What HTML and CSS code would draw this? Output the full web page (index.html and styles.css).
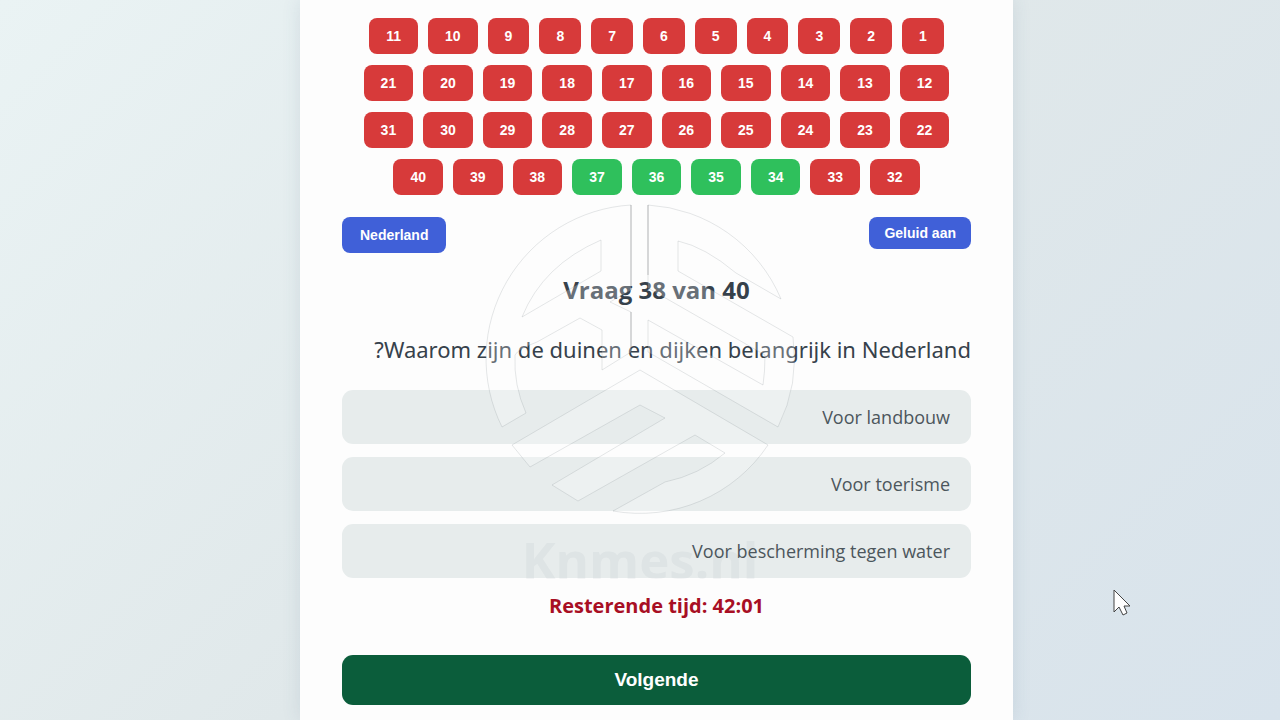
FILE: index.html
```html
<!DOCTYPE html>
<html lang="nl">
<head>
<meta charset="utf-8">
<meta name="viewport" content="width=device-width, initial-scale=1">
<title>Knmes.nl</title>
<link rel="stylesheet" href="styles.css">
</head>
<body>
<main class="quiz" dir="rtl">
  <nav class="numbers" aria-label="Vragen">
    <button class="num">1</button><button class="num">2</button><button class="num">3</button><button class="num">4</button><button class="num">5</button><button class="num">6</button><button class="num">7</button><button class="num">8</button><button class="num">9</button><button class="num">10</button><button class="num">11</button>
    <button class="num">12</button><button class="num">13</button><button class="num">14</button><button class="num">15</button><button class="num">16</button><button class="num">17</button><button class="num">18</button><button class="num">19</button><button class="num">20</button><button class="num">21</button>
    <button class="num">22</button><button class="num">23</button><button class="num">24</button><button class="num">25</button><button class="num">26</button><button class="num">27</button><button class="num">28</button><button class="num">29</button><button class="num">30</button><button class="num">31</button>
    <button class="num">32</button><button class="num">33</button><button class="num done">34</button><button class="num done">35</button><button class="num done">36</button><button class="num done">37</button><button class="num">38</button><button class="num">39</button><button class="num">40</button>
  </nav>
  <div class="tools">
    <button class="tool">Geluid aan</button>
    <button class="tool topic">Nederland</button>
  </div>
  <h1 class="title">Vraag 38 van 40</h1>
  <p class="question">Waarom zijn de duinen en dijken belangrijk in Nederland?</p>
  <div class="options">
    <button class="option">Voor landbouw</button>
    <button class="option">Voor toerisme</button>
    <button class="option">Voor bescherming tegen water</button>
  </div>
  <p class="timer">Resterende tijd: 42:01</p>
  <button class="next">Volgende</button>
  <div class="watermark" dir="ltr">
    <svg class="mark" viewBox="480 200 320 320" aria-hidden="true">
      <path d="M631 205A154 154 0 0 0 502 427L526 413A126 126 0 0 1 515 355Q518 349 537 342L580 318L602 330V370L631 352V312L610 302L631 290Z M601 240V271L522 317Q543 265 601 240Z"/>
      <path d="M648 205A154 154 0 0 1 781 299L736 273Q705 247 678 241V271L793 337A154 154 0 0 1 778 427L648 352V320L763 385Q765 372 765 355L648 288Z"/>
      <path d="M640 370L768 445A154 154 0 0 1 613 511L665 482Q699 475 725 453L695 435L578 501L552 485L665 418L640 405L530 467L512 445Z"/>
      <path class="edge" d="M631 205V290M631 312V352M648 205V275"/>
    </svg>
    <span class="brand">Knmes.nl</span>
  </div>
</main>
<svg class="pointer" viewBox="0 0 18 28" aria-hidden="true"><path d="M1 1V23L6 18L10 26L14 24L11 17H17Z"/></svg>
</body>
</html>
```
FILE: styles.css
```css
* { box-sizing: border-box; }

body {
  margin: 0;
  min-height: 100vh;
  padding-left: 33px;
  background: linear-gradient(135deg, #eaf3f4 0%, #e0e8ea 50%, #d8e3ec 100%);
  font-family: "Open Sans", "Noto Sans", sans-serif;
  color: #36414b;
}

button {
  border: 0;
  margin: 0;
  font-family: "Liberation Sans", Arial, sans-serif;
  font-weight: 700;
  color: #fff;
  cursor: pointer;
}

.quiz {
  position: relative;
  max-width: 713px;
  min-height: 100vh;
  margin: 0 auto;
  padding: 18px 42px 15px;
  background: #fdfdfd;
  box-shadow: 0 0 18px rgba(60, 90, 120, 0.12);
}

.numbers {
  display: flex;
  flex-wrap: wrap;
  justify-content: center;
  gap: 11px 10px;
}

.num {
  height: 36px;
  padding: 0 17px;
  border-radius: 8px;
  background: #d73a3a;
  font-size: 14px;
}

.num.done { background: #2fc05c; }

.tools {
  display: flex;
  justify-content: space-between;
  align-items: flex-start;
  margin-top: 22px;
}

.tool {
  height: 32px;
  padding: 0 15px;
  border-radius: 8px;
  background: #4060d8;
  font-size: 14px;
}

.tool.topic {
  height: 36px;
  padding: 0 18px;
}

.title {
  margin: 19px 0 0;
  font-size: 24px;
  line-height: 36px;
  font-weight: 700;
  text-align: center;
}

.question {
  margin: 24px 0 0;
  font-family: "Noto Sans", "Open Sans", sans-serif;
  font-size: 22px;
  line-height: 34px;
}

.options {
  display: grid;
  gap: 13px;
  margin-top: 24px;
}

.option {
  height: 54px;
  padding: 0 21px;
  border-radius: 11px;
  background: #e7ecec;
  font-family: "Open Sans", "Noto Sans", sans-serif;
  font-size: 18px;
  font-weight: 400;
  color: #4c565c;
  text-align: right;
}

.timer {
  margin: 14px 0 0;
  font-size: 20px;
  line-height: 28px;
  font-weight: 700;
  text-align: center;
  color: #a80f24;
}

.next {
  width: 100%;
  height: 50px;
  margin-top: 35px;
  border-radius: 11px;
  background: #0b5d3b;
  font-size: 19px;
}

.watermark {
  position: absolute;
  top: 200px;
  left: 180px;
  width: 320px;
  pointer-events: none;
}

.mark {
  display: block;
  width: 100%;
  fill: rgba(255, 255, 255, 0.25);
  stroke: rgba(110, 120, 125, 0.18);
  stroke-width: 1;
}

.mark .edge {
  fill: none;
  stroke: rgba(80, 80, 85, 0.16);
  stroke-width: 2;
}

.brand {
  display: block;
  text-align: center;
  font-size: 51px;
  line-height: 78px;
  font-weight: 700;
  color: rgba(90, 110, 115, 0.06);
}

.pointer {
  position: absolute;
  top: 589px;
  left: 1113px;
  width: 18px;
  height: 28px;
  fill: #fff;
  stroke: #444;
  stroke-width: 1;
}
```
